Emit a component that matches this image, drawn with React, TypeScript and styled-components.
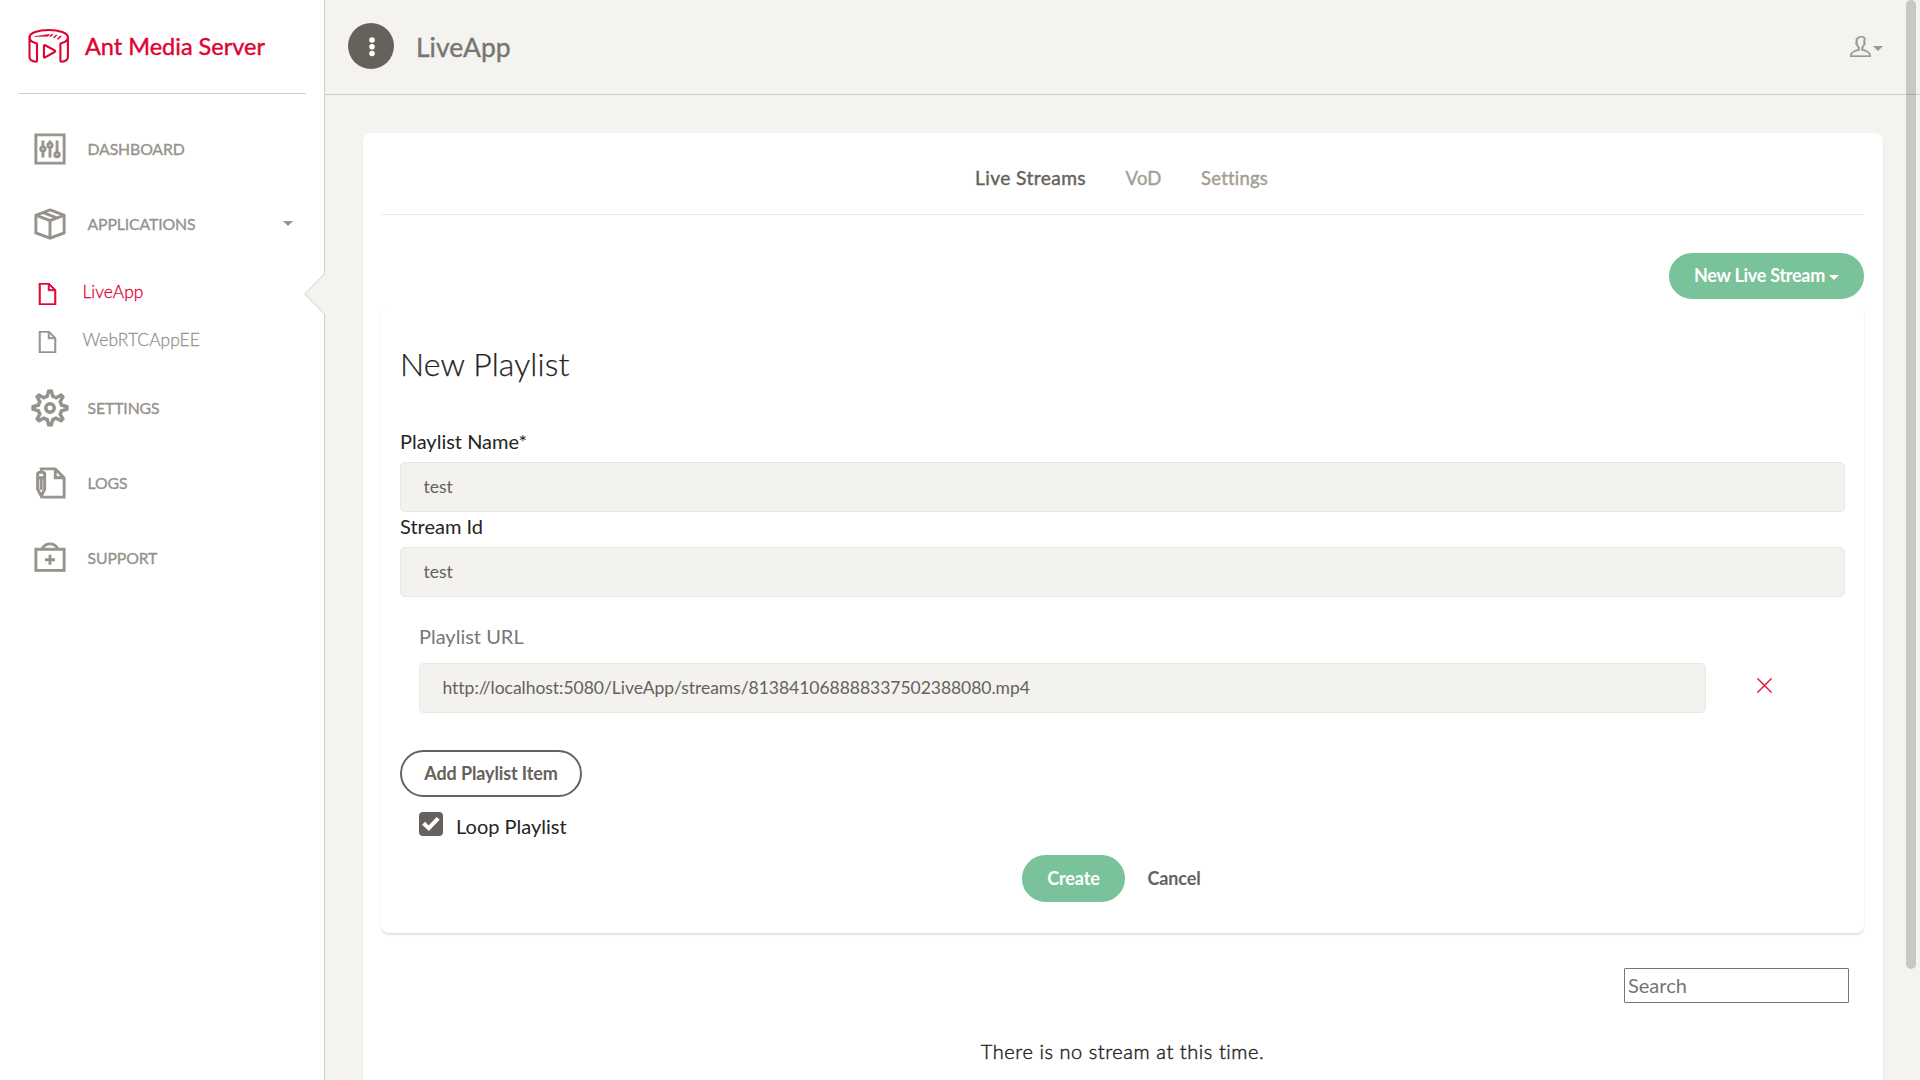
import React from "react";
import styled, { createGlobalStyle } from "styled-components";
import {
  TfiClose,
  TfiFile,
  TfiPackage,
  TfiPanel,
  TfiSettings,
  TfiSupport,
  TfiUser,
  TfiWrite,
} from "react-icons/tfi";

const color = {
  canvas: "#f4f3ef",
  field: "#f3f2ee",
  fieldBorder: "#e8e7e3",
  brand: "#df0233",
  muted: "#96928c",
  dark: "#66615b",
  ink: "#252422",
  green: "#7ac29a",
  line: "#cfcfca",
};

const GlobalStyle = createGlobalStyle`
  *, *::before, *::after { box-sizing: border-box; }
  body {
    margin: 0;
    height: 1080px;
    overflow: hidden;
    background: ${color.canvas};
    font-family: Lato, "Open Sans", sans-serif;
    color: ${color.ink};
  }
  button, input { font-family: inherit; }
`;

const Page = styled.div`
  position: relative;
  display: flex;
  height: 1080px;
  overflow: hidden;
`;

const Sidebar = styled.aside`
  flex: 0 0 325px;
  background: #fff;
  border-right: 1px solid ${color.line};
`;

const Brand = styled.div`
  display: flex;
  align-items: center;
  gap: 15px;
  height: 94px;
  margin: 0 18px 0 19px;
  padding: 0 0 1px 9px;
  border-bottom: 1px solid #ccc;
  color: ${color.brand};
  font-size: 23.5px;
  font-weight: 400;
  -webkit-text-stroke: 0.4px currentColor;
`;

const Nav = styled.nav`
  padding-top: 17px;
`;

const NavItem = styled.a`
  display: flex;
  align-items: center;
  height: 75px;
  padding: 0 31px 0 25px;
  color: ${color.muted};
  font-size: 15.8px;
  font-weight: 400;
  letter-spacing: -0.12px;
  -webkit-text-stroke: 0.35px currentColor;
`;

const NavIcon = styled.span<{ $size: number }>`
  display: grid;
  place-items: center;
  width: 50px;
  margin-right: 12.5px;
  svg {
    width: ${(p) => p.$size}px;
    height: ${(p) => p.$size}px;
    stroke: currentColor;
    stroke-width: 0.65;
    overflow: visible;
  }
`;

const SubNav = styled.div`
  padding: 6px 0 7px;
`;

const SubItem = styled.a<{ $active?: boolean }>`
  position: relative;
  display: flex;
  align-items: center;
  height: 48px;
  padding-left: 36px;
  color: ${(p) => (p.$active ? color.brand : color.muted)};
  font-size: 17.4px;
  font-weight: 300;
  -webkit-text-stroke: 0.3px currentColor;
  letter-spacing: 0.05px;
  svg.file {
    width: 23px;
    height: 22px;
    margin: 5px 23.5px 0 0;
    stroke: currentColor;
    stroke-width: 0.55;
  }
`;

const Notch = styled.svg`
  position: absolute;
  right: -1px;
  top: 6px;
  width: 21px;
  height: 42px;
`;

const Caret = styled.i`
  width: 0;
  height: 0;
  border: 5px solid transparent;
  border-top-color: currentColor;
  border-bottom: 0;
`;

const NavCaret = styled(Caret)`
  margin-left: auto;
`;

const Main = styled.main`
  flex: 1;
  min-width: 0;
`;

const TopBar = styled.header`
  display: flex;
  align-items: center;
  height: 95px;
  padding: 0 37px 0 23px;
  border-bottom: 1px solid #ccc;
`;

const MenuButton = styled.button`
  display: grid;
  place-items: center;
  width: 46px;
  height: 46px;
  margin: 0 22px 2px 0;
  padding: 0;
  border: 0;
  border-radius: 50%;
  background: ${color.dark};
`;

const AppTitle = styled.h1`
  margin: 0;
  color: #777675;
  font-size: 26.5px;
  font-weight: 400;
  -webkit-text-stroke: 0.4px currentColor;
`;

const UserMenu = styled.div`
  display: flex;
  align-items: center;
  gap: 2px;
  margin-left: auto;
  color: #9a9895;
  svg {
    width: 21px;
    height: 21px;
    margin-bottom: 2px;
    stroke: currentColor;
    stroke-width: 0.6;
  }
`;

const UserCaret = styled(Caret)`
  margin-top: 2px;
`;

const Card = styled.section`
  height: 1000px;
  margin: 38px 37px 0 38px;
  padding: 0 19px 0 18px;
  border-radius: 8px;
  background: #fff;
  box-shadow: 0 2px 2px rgba(204, 197, 185, 0.5);
`;

const Tabs = styled.div`
  display: flex;
  align-items: center;
  justify-content: center;
  gap: 39.5px;
  height: 82px;
  padding: 8px 2px 0 0;
  border-bottom: 1px solid #f1eae0;
`;

const Tab = styled.a<{ $active?: boolean }>`
  color: ${(p) => (p.$active ? color.dark : "#a49e93")};
  font-size: ${(p) => (p.$active ? 19.2 : 18.5)}px;
  font-weight: 400;
  -webkit-text-stroke: 0.4px currentColor;
  letter-spacing: ${(p) => (p.$active ? 0.4 : 0.2)}px;
`;

const Actions = styled.div`
  display: flex;
  justify-content: flex-end;
  margin-top: 38px;
`;

const Button = styled.button<{ $kind: "fill" | "outline" | "plain"; $width: number }>`
  display: inline-flex;
  align-items: center;
  justify-content: center;
  width: ${(p) => p.$width}px;
  height: 47px;
  padding: 0 0 1px;
  border: 2px solid
    ${(p) => (p.$kind === "fill" ? color.green : p.$kind === "outline" ? color.dark : "transparent")};
  border-radius: 25px;
  background: ${(p) => (p.$kind === "fill" ? color.green : "transparent")};
  color: ${(p) => (p.$kind === "fill" ? "#fff" : color.dark)};
  font-size: 18px;
  font-weight: 700;
  line-height: 24px;
  letter-spacing: -0.13px;
  white-space: nowrap;
`;

const NewStreamButton = styled(Button)`
  height: 46px;
  padding-bottom: 2px;
  gap: 4px;
  letter-spacing: -0.28px;
  i { margin-top: 5px; }
`;

const Panel = styled.form`
  height: 628px;
  margin-top: 6px;
  padding: 39px 19px 0;
  border-radius: 8px;
  background: #fff;
  box-shadow: 0 2px 2px rgba(204, 197, 185, 0.5);
`;

const Heading = styled.h2`
  margin: 0 0 43px;
  font-size: 32px;
  font-weight: 300;
  line-height: 40px;
  letter-spacing: 0.12px;
  -webkit-text-stroke: 0.25px currentColor;
`;

const Label = styled.label`
  display: block;
  margin-bottom: 7px;
  font-size: 20px;
  line-height: 28px;
`;

const TextField = styled.input`
  display: block;
  width: 100%;
  height: 50px;
  padding: 0 22px 1px 22.5px;
  border: 1px solid ${color.fieldBorder};
  border-radius: 5px;
  outline: none;
  background: ${color.field};
  color: ${color.dark};
  font-size: 17.5px;
  letter-spacing: -0.03px;
`;

const ItemBlock = styled.div`
  padding: 25px 0 37px 19px;
`;

const ItemLabel = styled(Label)`
  margin-bottom: 13px;
  color: #7a7875;
`;

const ItemRow = styled.div`
  display: grid;
  grid-template-columns: 1287px 17px;
  gap: 50px;
  align-items: center;
`;

const RemoveButton = styled.button`
  display: grid;
  height: 17px;
  margin-bottom: 5px;
  padding: 0;
  border: 0;
  background: none;
  color: #dd0a30;
  svg {
    width: 17px;
    height: 17px;
    stroke: currentColor;
    stroke-width: 0.5;
  }
`;

const LoopRow = styled.label`
  display: flex;
  gap: 13px;
  height: 28px;
  margin: 15px 0 15px 19px;
  font-size: 20px;
  line-height: 29px;
`;

const CheckBox = styled.span`
  display: grid;
  place-items: center;
  width: 24px;
  height: 24px;
  border-radius: 4px;
  background: ${color.dark};
`;

const FormButtons = styled.div`
  display: flex;
  justify-content: center;
`;

const SearchRow = styled.div`
  display: flex;
  justify-content: flex-end;
  margin: 35px 15px 0 0;
`;

const SearchInput = styled.input`
  width: 225px;
  height: 35px;
  padding: 0 3px 2px;
  border: 1px solid #767676;
  border-radius: 1px;
  background: #fff;
  font-size: 20px;
  &::placeholder { color: #757575; }
`;

const Empty = styled.p`
  margin: 34px 0 0;
  font-size: 20px;
  font-weight: 300;
  line-height: 28px;
  letter-spacing: 0.57px;
  text-align: center;
  -webkit-text-stroke: 0.45px currentColor;
`;

const ScrollThumb = styled.div`
  position: absolute;
  top: 0;
  right: 4px;
  width: 10px;
  height: 969px;
  border-radius: 5px;
  background: rgba(0, 0, 0, 0.18);
`;

const Logo = () => (
  <svg width="42" height="36" viewBox="0 0 42 36" fill="none" stroke="currentColor" strokeWidth="2.1" strokeLinejoin="round" strokeLinecap="round">
    <path d="M1.5 9.2C1.5 5 10 2 20.7 2s19.2 3 19.2 7.2V29c0 3-3.4 4.5-6.500 4.800q-1 0-1-1V15.500c5-1.200 7.500-3.600 7.500-6.300" />
    <path d="M1.500 9.200V29c0 3 3.400 4.500 6.500 4.800q1 0 1-1V15.500C4 14.300 1.500 11.900 1.500 9.200" />
    <path d="M15.900 18.200v10.500q0 1.300 1.200.6l9.500-5.300q1.200-.8 0-1.600l-9.500-5.100q-1.200-.5-1.200.9Z" />
    <path d="M7 8.500 21.500 6.200l-1.200 1.900Z" fill="currentColor" strokeWidth=".5" />
    <path d="m22.200 8.300 2-1.700M26 9.500l2.300-2.300M30 10.900l2.700-2.600" strokeWidth="1.500" />
  </svg>
);

const navBottom = [
  { label: "SETTINGS", Icon: TfiSettings, size: 36 },
  { label: "LOGS", Icon: TfiWrite, size: 30 },
  { label: "SUPPORT", Icon: TfiSupport, size: 30 },
];

export default function App() {
  return (
    <>
      <GlobalStyle />
      <Page>
        <Sidebar>
          <Brand>
            <Logo />
            Ant Media Server
          </Brand>
          <Nav>
            <NavItem>
              <NavIcon $size={30}><TfiPanel /></NavIcon>
              DASHBOARD
            </NavItem>
            <NavItem>
              <NavIcon $size={30}><TfiPackage /></NavIcon>
              APPLICATIONS
              <NavCaret />
            </NavItem>
            <SubNav>
              <SubItem $active>
                <TfiFile className="file" />
                LiveApp
                <Notch viewBox="0 0 21 42">
                  <path d="M21 .5 .8 21 21 41.5Z" fill={color.canvas} />
                  <path d="M20.5 .8 .8 21 20.5 41.2" fill="none" stroke="#deddd8" strokeWidth="1.2" />
                </Notch>
              </SubItem>
              <SubItem>
                <TfiFile className="file" />
                WebRTCAppEE
              </SubItem>
            </SubNav>
            {navBottom.map(({ label, Icon, size }) => (
              <NavItem key={label}>
                <NavIcon $size={size}><Icon /></NavIcon>
                {label}
              </NavItem>
            ))}
          </Nav>
        </Sidebar>
        <Main>
          <TopBar>
            <MenuButton aria-label="Menu">
              <svg width="8" height="22" viewBox="0 0 8 22" fill="#fff">
                <circle cx="5" cy="5" r="2.8" />
                <circle cx="5" cy="11.8" r="2.8" />
                <circle cx="5" cy="18.5" r="2.8" />
              </svg>
            </MenuButton>
            <AppTitle>LiveApp</AppTitle>
            <UserMenu>
              <TfiUser />
              <UserCaret />
            </UserMenu>
          </TopBar>
          <Card>
            <Tabs>
              <Tab $active>Live Streams</Tab>
              <Tab>VoD</Tab>
              <Tab>Settings</Tab>
            </Tabs>
            <Actions>
              <NewStreamButton $kind="fill" $width={195} type="button">
                New Live Stream
                <Caret />
              </NewStreamButton>
            </Actions>
            <Panel>
              <Heading>New Playlist</Heading>
              <Label>Playlist Name*</Label>
              <TextField defaultValue="test" />
              <Label>Stream Id</Label>
              <TextField defaultValue="test" />
              <ItemBlock>
                <ItemLabel>Playlist URL</ItemLabel>
                <ItemRow>
                  <TextField defaultValue="http://localhost:5080/LiveApp/streams/813841068888337502388080.mp4" />
                  <RemoveButton type="button" aria-label="Remove">
                    <TfiClose />
                  </RemoveButton>
                </ItemRow>
              </ItemBlock>
              <Button $kind="outline" $width={182} type="button">Add Playlist Item</Button>
              <LoopRow>
                <CheckBox>
                  <svg width="18" height="16" viewBox="0 0 18 16" fill="none" stroke="#fff" strokeWidth="4">
                    <path d="M1.5 7.2 6.8 12.2 16.2 2.3" />
                  </svg>
                </CheckBox>
                Loop Playlist
              </LoopRow>
              <FormButtons>
                <Button $kind="fill" $width={103} type="button">Create</Button>
                <Button $kind="plain" $width={98} type="button">Cancel</Button>
              </FormButtons>
            </Panel>
            <SearchRow>
              <SearchInput placeholder="Search" />
            </SearchRow>
            <Empty>There is no stream at this time.</Empty>
          </Card>
        </Main>
        <ScrollThumb />
      </Page>
    </>
  );
}
